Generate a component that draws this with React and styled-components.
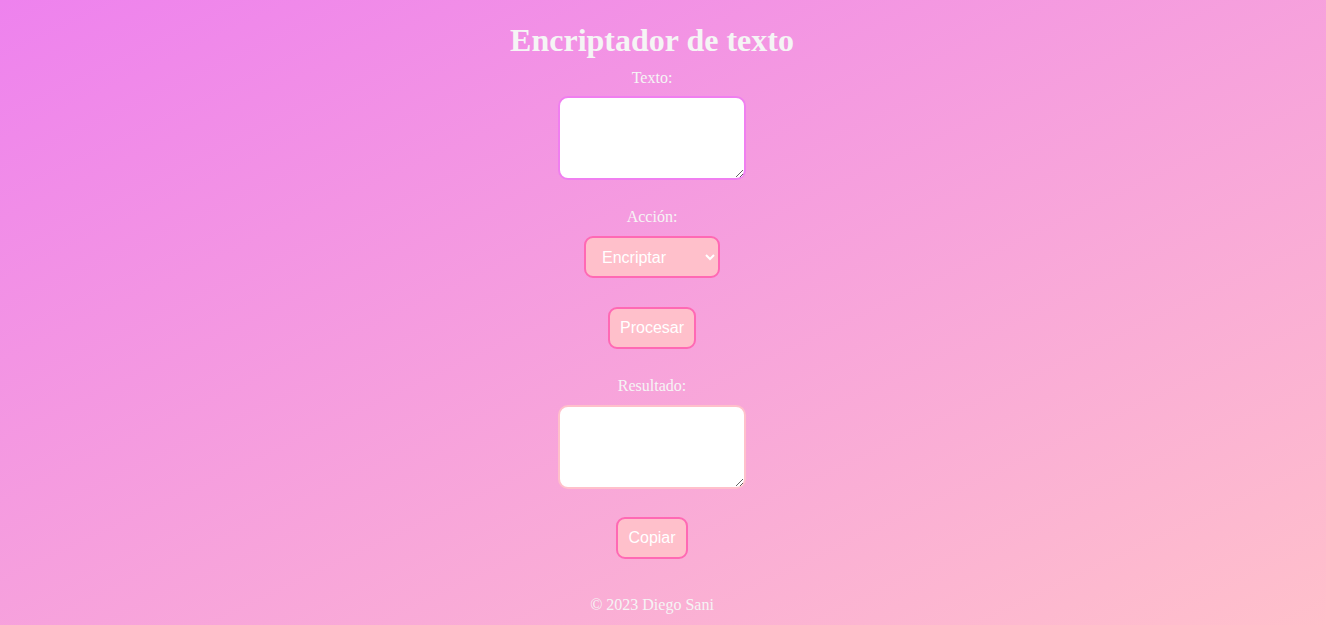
import React from "react";
import styled, { createGlobalStyle } from "styled-components";

const GlobalStyle = createGlobalStyle`
  html, body {
    margin: 0;
    padding: 0;
  }
  body {
    min-height: 100vh;
    background: linear-gradient(to bottom right, #ee82ee, #ffc0cb);
    font-family: "Liberation Serif", "Times New Roman", serif;
    color: #f5f5f5;
  }
`;

const Page = styled.main`
  min-height: 625px;
  padding-right: 22px;
  display: flex;
  flex-direction: column;
  align-items: center;
`;

const Title = styled.h1`
  margin: 22px 0 0;
  font-size: 32px;
  line-height: 37px;
  font-weight: bold;
  color: #f5f5f5;
`;

const Form = styled.form`
  display: flex;
  flex-direction: column;
  align-items: center;
`;

const Label = styled.label`
  display: block;
  font-size: 16px;
  line-height: 20px;
  margin-top: ${(p) => p.$top}px;
  color: #f5f5f5;
`;

const TextArea = styled.textarea`
  display: block;
  box-sizing: border-box;
  width: 188px;
  height: 84px;
  margin-top: ${(p) => p.$top}px;
  padding: 10px;
  border: 2px solid ${(p) => p.$border};
  border-radius: 10px;
  background: #ffffff;
  outline: none;
`;

const Select = styled.select`
  display: block;
  box-sizing: border-box;
  width: 136px;
  height: 42px;
  margin-top: 9px;
  padding: 0 8px 0 12px;
  border: 2px solid #ff69b4;
  border-radius: 9px;
  background: #ffc0cb;
  color: #ffffff;
  font-family: "Liberation Sans", Arial, sans-serif;
  font-size: 16px;
  outline: none;
`;

const Button = styled.button`
  display: block;
  margin-top: ${(p) => p.$top}px;
  padding: 10px;
  border: 2px solid #ff69b4;
  border-radius: 9px;
  background: #ffc0cb;
  color: #ffffff;
  font-family: "Liberation Sans", Arial, sans-serif;
  font-size: 16px;
  line-height: 18px;
  cursor: pointer;
`;

const Footer = styled.footer`
  margin-top: 36px;
  font-size: 16px;
  line-height: 20px;
  color: #f5f5f5;
`;

export default function App() {
  return (
    <>
      <GlobalStyle />
      <Page>
        <Title>Encriptador de texto</Title>
        <Form onSubmit={(e) => e.preventDefault()}>
          <Label $top={9} htmlFor="texto">Texto:</Label>
          <TextArea id="texto" $top={8} $border="#f07ff0" />
          <Label $top={27} htmlFor="accion">Acción:</Label>
          <Select id="accion" defaultValue="encriptar">
            <option value="encriptar">Encriptar</option>
            <option value="desencriptar">Desencriptar</option>
          </Select>
          <Button type="button" $top={29}>Procesar</Button>
          <Label $top={27} htmlFor="resultado">Resultado:</Label>
          <TextArea id="resultado" $top={9} $border="#ffc0cb" readOnly />
          <Button type="button" $top={28}>Copiar</Button>
        </Form>
        <Footer>© 2023 Diego Sani</Footer>
      </Page>
    </>
  );
}
